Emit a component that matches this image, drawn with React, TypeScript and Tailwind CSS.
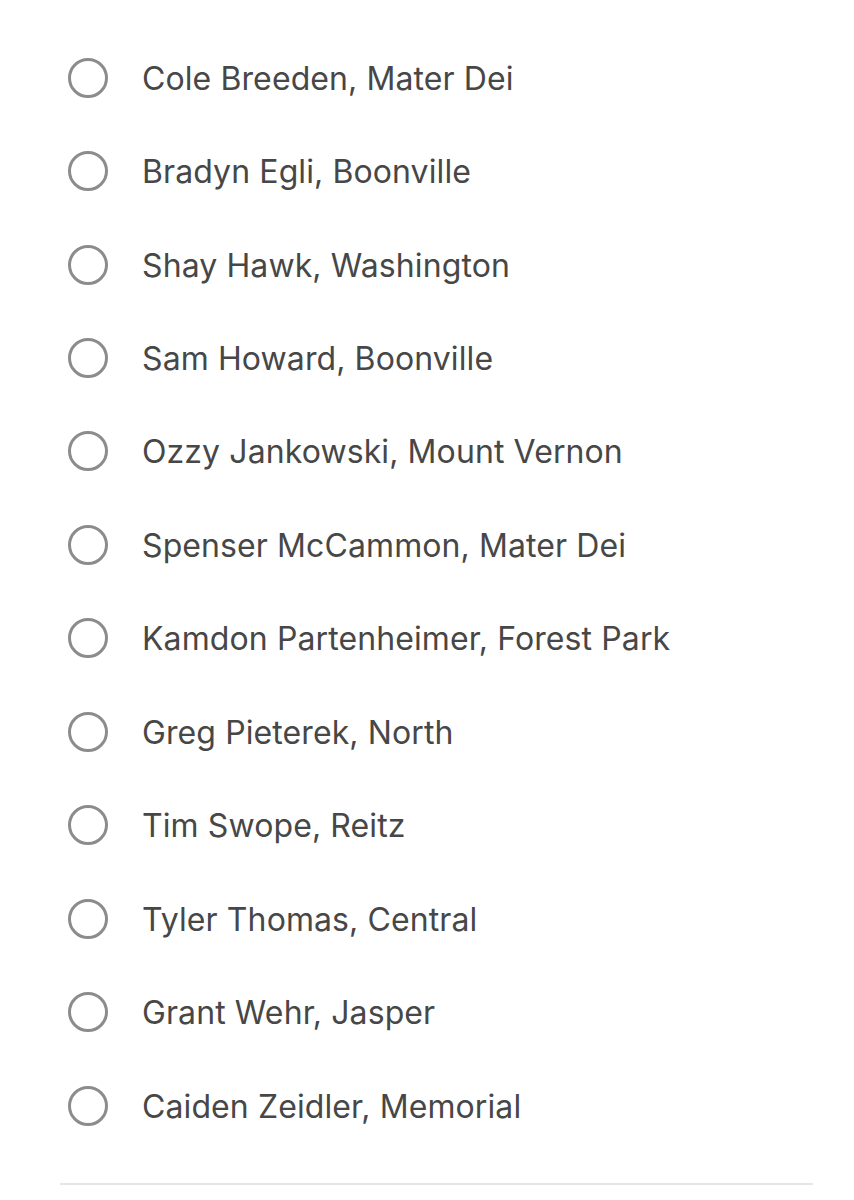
import React from "react";

const players = [
  "Cole Breeden, Mater Dei",
  "Bradyn Egli, Boonville",
  "Shay Hawk, Washington",
  "Sam Howard, Boonville",
  "Ozzy Jankowski, Mount Vernon",
  "Spenser McCammon, Mater Dei",
  "Kamdon Partenheimer, Forest Park",
  "Greg Pieterek, North",
  "Tim Swope, Reitz",
  "Tyler Thomas, Central",
  "Grant Wehr, Jasper",
  "Caiden Zeidler, Memorial",
];

export default function App() {
  return (
    <div className="w-[854px] h-[1200px] bg-white overflow-hidden" style={{ fontFamily: "Inter, 'Noto Sans', sans-serif" }}>
      <div className="pt-[31px] pl-[68px]">
        {players.map((name) => (
          <label key={name} className="flex items-center h-[93.45px] cursor-pointer">
            {/* radio circle */}
            <span className="w-[40px] h-[40px] rounded-full border-[3px] border-[#8c8c8c] shrink-0" />
            <span className="ml-[34px] pt-[2px] text-[32px] text-[#474747] tracking-[0.1px]">{name}</span>
          </label>
        ))}
      </div>
      <div className="mt-[31px] ml-[60px] w-[753px] h-[2px] bg-[#e6e6e6]" />
    </div>
  );
}
